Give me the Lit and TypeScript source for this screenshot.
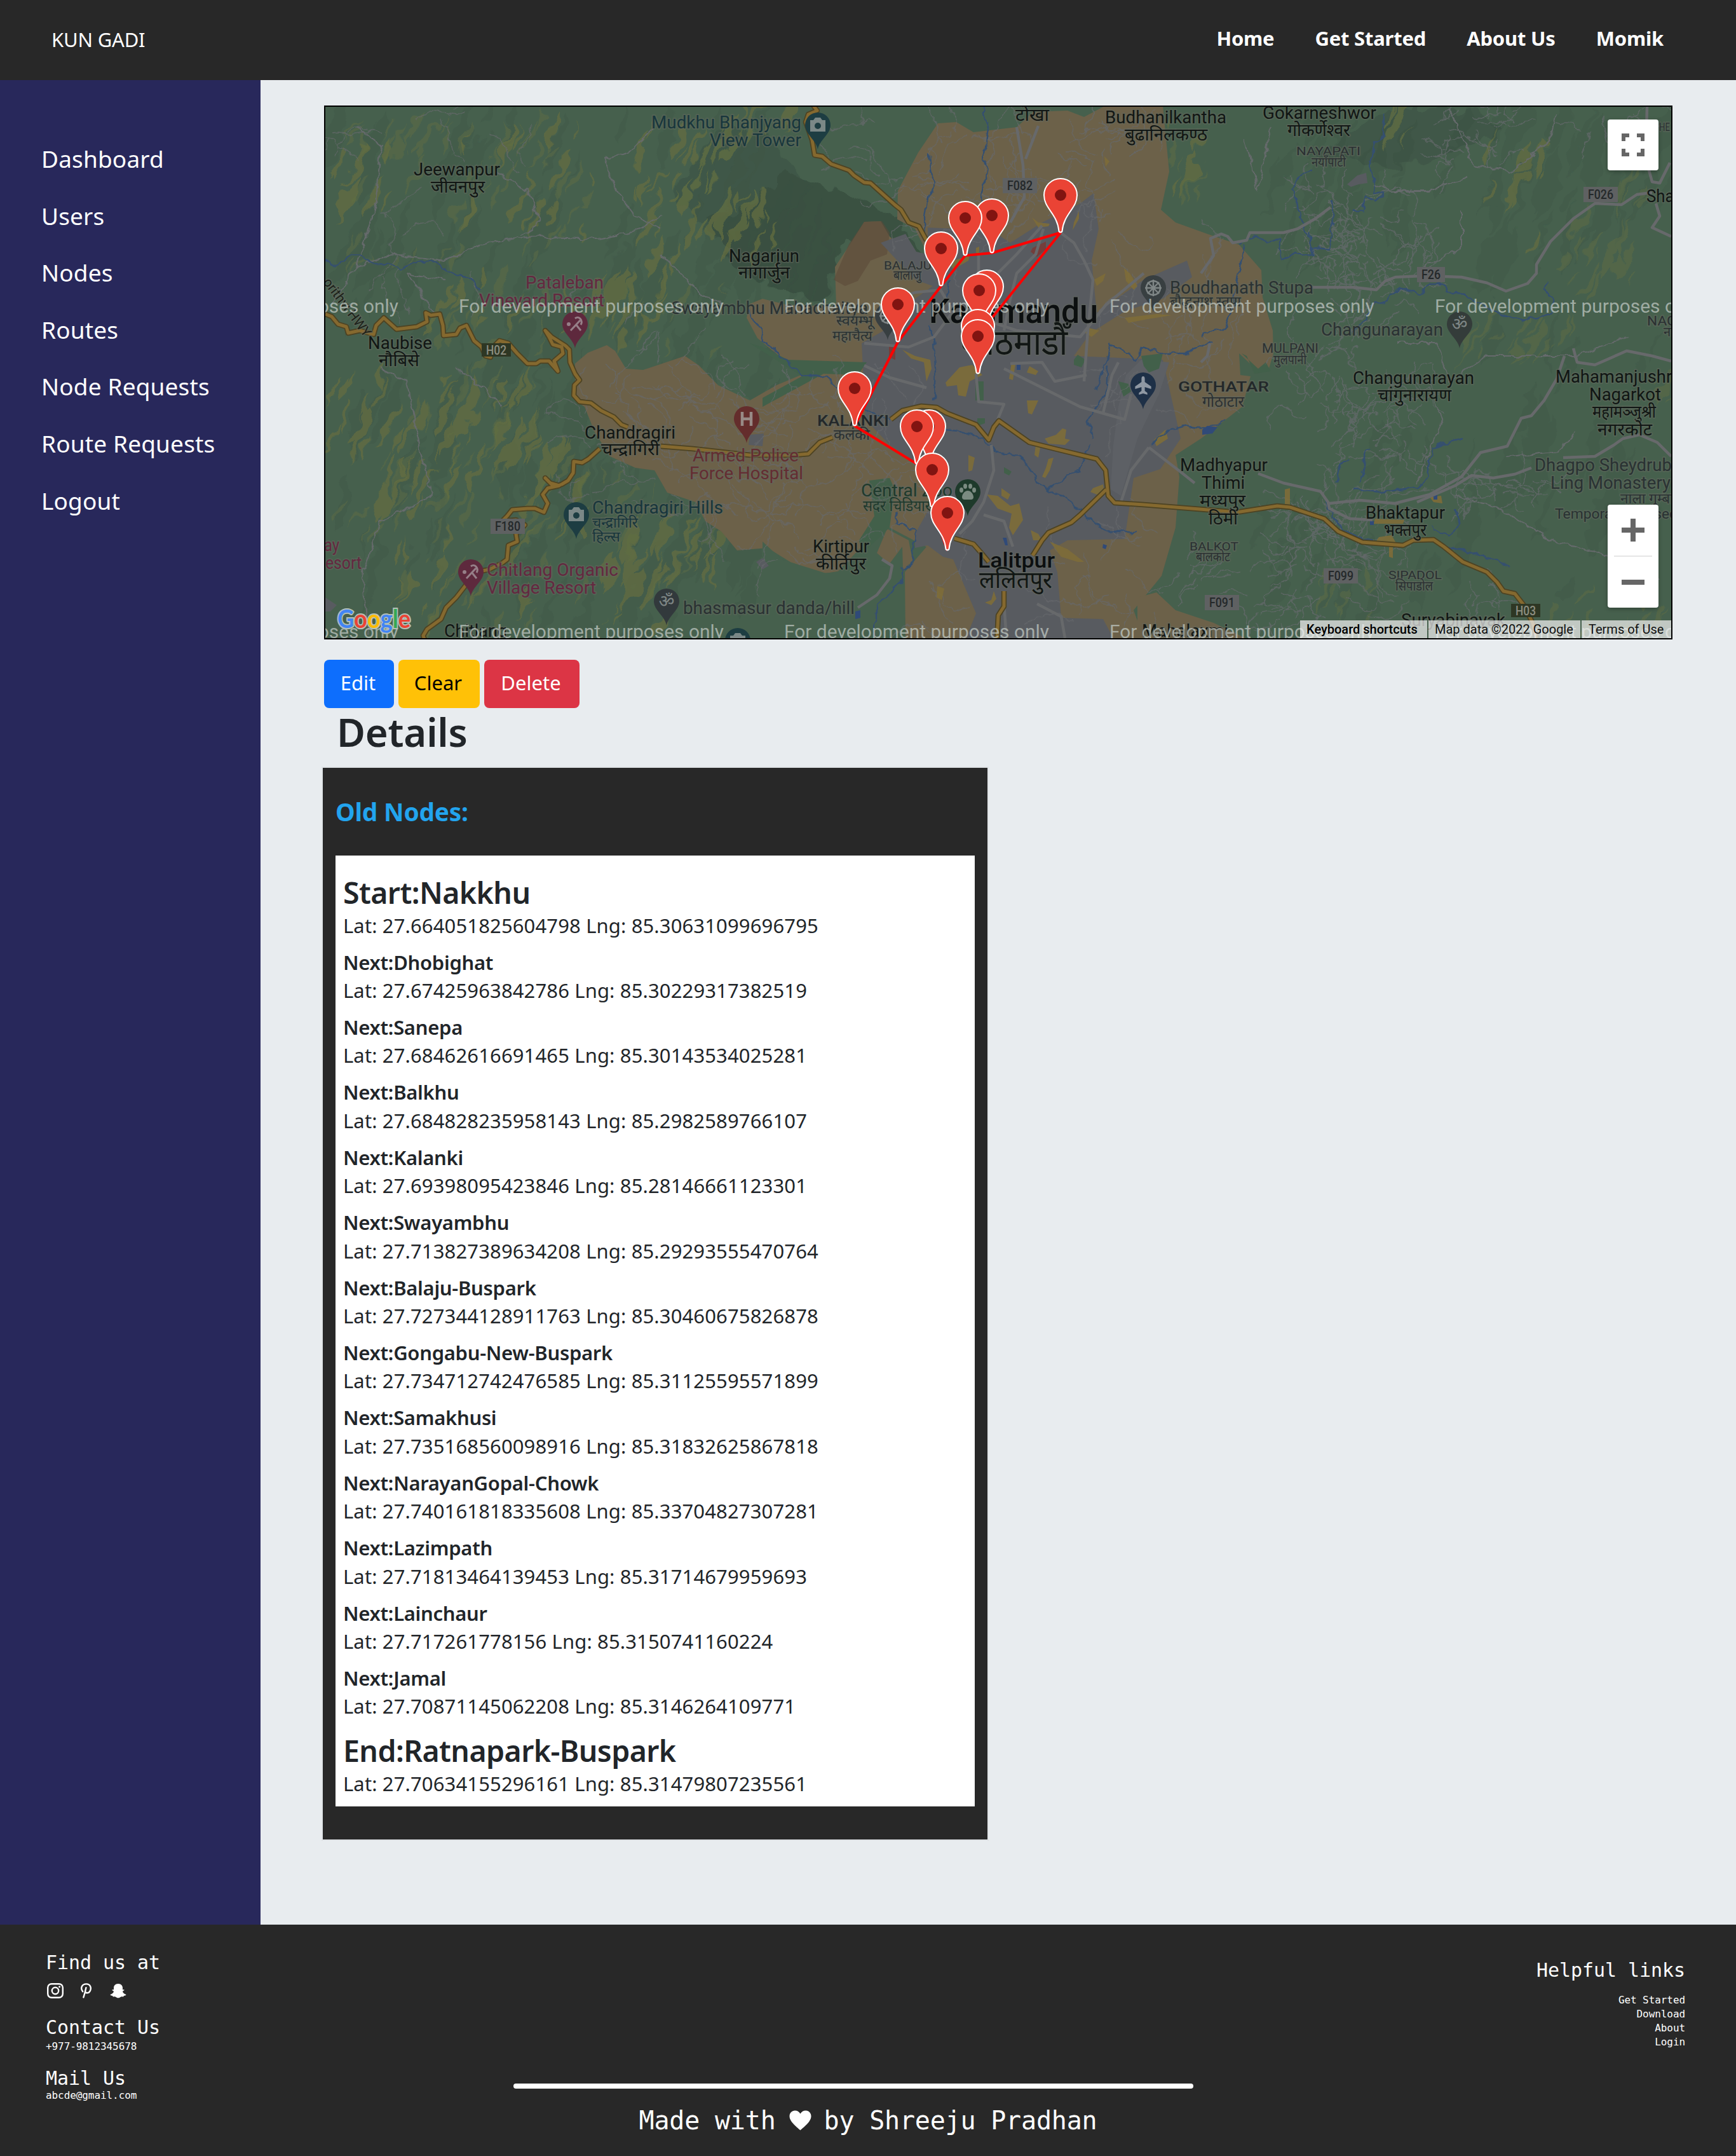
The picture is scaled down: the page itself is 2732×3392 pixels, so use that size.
import { LitElement, html, svg, css } from "lit";
import { customElement } from "lit/decorators.js";

/* ---------- route data ---------- */

interface RouteNode {
  name: string;
  lat: string;
  lng: string;
  x: number;
  y: number;
}

const NODES: RouteNode[] = [
  { name: "Nakkhu", lat: "27.664051825604798", lng: "85.30631099696795", x: 1491, y: 866 },
  { name: "Dhobighat", lat: "27.67425963842786", lng: "85.30229317382519", x: 1467, y: 798 },
  { name: "Sanepa", lat: "27.68462616691465", lng: "85.30143534025281", x: 1462, y: 730 },
  { name: "Balkhu", lat: "27.684828235958143", lng: "85.2982589766107", x: 1443, y: 730 },
  { name: "Kalanki", lat: "27.69398095423846", lng: "85.28146661123301", x: 1345, y: 670 },
  { name: "Swayambhu", lat: "27.713827389634208", lng: "85.29293555470764", x: 1413, y: 538 },
  { name: "Balaju-Buspark", lat: "27.727344128911763", lng: "85.30460675826878", x: 1481, y: 450 },
  { name: "Gongabu-New-Buspark", lat: "27.734712742476585", lng: "85.31125595571899", x: 1519, y: 402 },
  { name: "Samakhusi", lat: "27.735168560098916", lng: "85.31832625867818", x: 1561, y: 398 },
  { name: "NarayanGopal-Chowk", lat: "27.740161818335608", lng: "85.33704827307281", x: 1669, y: 366 },
  { name: "Lazimpath", lat: "27.71813464139453", lng: "85.31714679959693", x: 1553, y: 510 },
  { name: "Lainchaur", lat: "27.717261778156", lng: "85.3150741160224", x: 1541, y: 516 },
  { name: "Jamal", lat: "27.70871145062208", lng: "85.3146264109771", x: 1539, y: 572 },
  { name: "Ratnapark-Buspark", lat: "27.70634155296161", lng: "85.31479807235561", x: 1539, y: 588 },
];

const routeLine = NODES.map((n) => `${n.x},${n.y}`).join(" ");
const markers = [...NODES].sort((a, b) => a.y - b.y);

/* ---------- terrain generation ---------- */

function seeded(seed: number) {
  let a = seed;
  return () => {
    a = (a + 0x6d2b79f5) | 0;
    let t = Math.imul(a ^ (a >>> 15), 1 | a);
    t = (t + Math.imul(t ^ (t >>> 7), 61 | t)) ^ t;
    return ((t ^ (t >>> 14)) >>> 0) / 4294967296;
  };
}

type Region = [x: number, y: number, w: number, h: number, count: number];

function ridges(seed: number, regions: Region[], min: number, max: number, slant: number) {
  const r = seeded(seed);
  let d = "";
  for (const [x, y, w, h, n] of regions) {
    for (let i = 0; i < n; i++) {
      const cx = x + r() * w;
      const cy = y + r() * h;
      const len = min + r() * (max - min);
      const fat = len * (0.16 + r() * 0.3);
      const sx = len * slant * (0.3 + r());
      d += `M${(cx - sx).toFixed(0)} ${(cy + len).toFixed(0)}Q${(cx - fat).toFixed(0)} ${cy.toFixed(0)} ${(cx + sx).toFixed(0)} ${(cy - len).toFixed(0)}Q${(cx + fat * 1.3).toFixed(0)} ${(cy + fat * 0.4).toFixed(0)} ${(cx - sx).toFixed(0)} ${(cy + len).toFixed(0)}Z`;
    }
  }
  return d;
}

function lanes(seed: number, regions: Region[], steps: number, stride: number) {
  const r = seeded(seed);
  let d = "";
  for (const [x, y, w, h, n] of regions) {
    for (let i = 0; i < n; i++) {
      let px = x + r() * w;
      let py = y + r() * h;
      let a = r() * Math.PI * 2;
      d += `M${px.toFixed(0)} ${py.toFixed(0)}`;
      for (let s = 0; s < steps; s++) {
        a += (r() - 0.5) * 1.5;
        px += Math.cos(a) * stride;
        py += Math.sin(a) * stride;
        d += `L${px.toFixed(0)} ${py.toFixed(0)}`;
      }
    }
  }
  return d;
}

const DARK = ridges(7, [
  [512, 168, 700, 836, 150], [1060, 330, 240, 150, 26], [2000, 168, 630, 260, 60],
  [1950, 700, 680, 300, 34], [2300, 520, 320, 300, 16],
], 20, 70, 0.4);
const YELLOW = ridges(21, [
  [512, 220, 110, 110, 10], [720, 200, 220, 170, 18], [990, 200, 250, 210, 50], [1100, 168, 150, 60, 10],
  [640, 420, 300, 110, 10], [930, 440, 130, 100, 18], [520, 590, 150, 130, 20], [690, 590, 60, 170, 20],
  [780, 590, 60, 150, 20], [590, 730, 80, 80, 12], [820, 700, 100, 170, 12], [590, 840, 240, 130, 16], [940, 830, 190, 150, 30],
  [1830, 190, 60, 120, 6], [2175, 170, 50, 60, 6], [2340, 220, 90, 160, 10], [1240, 900, 60, 90, 5],
], 10, 36, 0.5);
const YELLOW_SOFT = ridges(33, [
  [2480, 350, 90, 90, 22], [2540, 280, 60, 40, 8], [2310, 500, 190, 60, 26], [2600, 580, 30, 60, 5],
  [2080, 890, 90, 80, 8], [2400, 930, 220, 70, 12], [2440, 380, 80, 70, 6], [1840, 230, 50, 90, 6],
  [540, 190, 330, 60, 34], [540, 260, 400, 160, 28], [600, 860, 500, 130, 24], [640, 440, 500, 120, 24],
  [520, 580, 330, 260, 40], [820, 730, 300, 120, 20],
], 8, 28, 0.6);
const LANES = lanes(5, [
  [512, 170, 330, 330, 16], [1300, 190, 130, 120, 8], [1450, 200, 380, 180, 52], [1740, 400, 230, 260, 26],
  [905, 570, 350, 240, 64], [1200, 620, 260, 270, 56], [1450, 880, 90, 110, 6], [1650, 830, 180, 150, 16],
  [2090, 700, 140, 250, 30],
], 9, 9);
const LANES_FINE = lanes(11, [
  [2040, 290, 150, 130, 44], [2090, 340, 160, 180, 60], [2010, 520, 130, 130, 26], [2100, 590, 150, 130, 48],
  [2020, 780, 120, 90, 40], [2290, 740, 140, 60, 26], [1960, 880, 120, 110, 28], [2270, 168, 90, 100, 22],
  [1850, 860, 60, 60, 10], [2240, 900, 120, 90, 8], [1700, 200, 120, 60, 12], [2380, 168, 240, 90, 12],
  [880, 470, 220, 110, 6],
], 7, 7);

/* ---------- areas and ways ---------- */

const TAN = [
  "M905 572L925 555L955 543L968 552L985 580L1012 582L1078 560L1100 575L1130 606L1180 630L1222 606L1265 588L1232 565L1192 532L1175 500L1180 478L1200 470L1240 480L1316 482L1314 420L1338 384L1360 349L1386 348L1400 372L1430 400L1460 400L1440 360L1412 345L1413 300L1445 240L1476 194L1505 192L1532 208L1600 200L1626 176L1680 174L1706 184L1740 166L1830 166L1840 270L1827 330L1850 350L1900 368L1950 385L1985 425L1987 468L2003 520L2004 556L1996 583L1980 584L1950 556L1952 590L1968 592L1955 640L1890 690L1850 716L1856 750L1850 830L1828 906L1784 960L1800 1004L1500 1004L1425 1004L1424 900L1460 858L1495 880L1400 830L1395 806L1356 860L1318 900L1292 902L1245 885L1208 862L1160 866L1135 836L1110 820L1095 790L1050 775L1030 740L1000 736L960 718L936 680L920 640L905 630Z",
  "M1380 870L1396 832L1430 850L1436 882L1418 904L1396 884Z",
  "M1790 940L1820 932L1850 960L1910 980L1960 1004L1790 1004Z",
];
const BROWN = "M1336 384L1360 349L1388 348L1400 366L1396 400L1370 410L1350 442L1330 450L1312 440Z";
const GREY = [
  "M1386 382L1425 368L1442 396L1476 404L1460 372L1460 358L1560 362L1590 382L1640 350L1700 320L1721 304L1729 360L1718 410L1722 452L1726 492L1800 440L1868 410L1876 436L1830 470L1770 490L1716 524L1690 560L1830 566L1858 690L1826 738L1784 752L1770 848L1680 850L1652 866L1664 900L1670 972L1736 974L1752 1004L1520 1004L1536 965L1500 880L1484 876L1460 858L1440 862L1440 840L1468 790L1470 748L1440 726L1400 700L1362 660L1356 540L1398 516L1440 470L1468 450L1440 440Z",
  "M2120 290L2136 276L2150 272L2152 288L2138 290L2126 294Z",
  "M512 940L530 952L520 962L512 962Z",
  "M1190 884L1200 878L1210 890L1200 896Z",
  "M1180 684L1202 682L1200 702L1178 700Z",
];
const AIRPORT = "M1752 700L1760 640L1772 590L1796 566L1840 570L1824 620L1790 690L1764 780L1748 770Z";
const PARKS = [
  "M1368 756L1400 752L1408 770L1400 830L1356 872L1352 850L1376 812Z",
  "M1690 566L1696 558L1708 566L1702 578L1690 574Z",
  "M1535 600L1548 600L1548 630L1535 630Z",
  "M1538 658L1550 658L1550 666L1538 670Z",
  "M1760 600L1776 604L1780 616L1768 624Z",
  "M1580 735L1592 742L1588 748L1580 744Z",
  "M1796 560L1830 556L1824 580L1808 586L1800 576Z",
  "M1954 556L1962 560L1974 588L2000 584L1992 570L1980 580Z",
  "M1364 570L1350 590L1296 588L1200 640L1200 626L1262 592L1180 540L1200 546L1240 566Z",
];
const CITY_YELLOW = [
  "M1488 602L1510 578L1530 574L1546 590L1526 600L1520 624L1508 622L1506 606L1490 608Z",
  "M1494 412L1526 402L1524 410L1500 424Z", "M1536 390L1541 388L1541 398L1536 398Z",
  "M1553 778L1570 780L1590 796L1604 792L1610 818L1594 842L1588 830L1592 808L1570 800Z",
  "M1576 768L1590 778L1586 786L1576 780Z", "M1630 700L1638 700L1634 720L1628 716Z",
  "M1650 722L1658 720L1652 740L1645 752L1640 750L1646 736Z", "M1616 630L1634 630L1624 652L1618 650Z",
  "M1644 690L1662 684L1672 674L1678 676L1676 690L1684 692L1676 700L1650 698Z",
  "M1720 768L1736 762L1738 778L1726 778L1716 774Z", "M1622 834L1634 840L1640 850L1626 850Z",
  "M1652 852L1680 864L1706 884L1696 884L1670 876Z", "M1524 716L1534 720L1530 740L1524 742Z",
  "M1420 550L1440 560L1464 566L1466 580L1458 600L1454 570L1434 564Z",
  "M1722 440L1740 430L1736 442L1726 450Z", "M1769 422L1778 430L1790 450L1784 456L1772 442Z",
  "M1690 350L1698 332L1698 344L1688 362Z", "M1624 342L1634 350L1652 352L1650 356L1634 358Z",
  "M1710 515L1730 520L1718 530L1708 524Z", "M1770 500L1820 494L1844 496L1806 502L1776 508Z",
  "M1475 922L1486 926L1482 944L1474 940Z", "M1564 930L1568 942L1560 952L1550 948L1560 944Z",
  "M1816 692L1834 676L1838 690L1820 702Z", "M1738 246L1746 254L1740 262Z", "M1620 576L1634 584L1630 590L1616 586Z",
  "M1592 570L1598 572L1594 598L1588 596Z", "M2170 845L2190 842L2198 856L2164 854Z", "M2164 816L2210 818L2208 824L2162 824Z",
  "M2250 782L2268 780L2270 792L2256 790Z", "M2186 860L2192 860L2192 878L2186 876Z", "M2022 770L2030 768L2030 794L2022 794Z",
];
const RIVERS = [
  "M512 410L530 417L546 406L560 401L576 408L590 415L616 416L630 422L655 412L685 411L700 424L720 434L740 437L748 444L755 457",
  "M1548 166L1556 206L1548 250L1554 264L1546 310L1550 340L1544 360",
  "M1462 240L1464 268L1472 290L1458 318L1455 340L1456 380",
  "M1178 485L1180 500L1196 514L1200 532L1220 555L1240 570L1262 588L1280 594L1300 592L1310 604L1330 620L1370 650L1400 660",
  "M1485 674L1510 676L1530 684L1548 692L1555 700L1575 713L1605 718L1622 738L1632 760L1648 770L1670 760L1682 746L1700 742L1716 700",
  "M1648 770L1670 780L1700 802L1720 822L1750 838L1788 838",
  "M1408 806L1412 824L1440 834L1438 864L1436 886L1420 896L1416 920L1400 932L1378 956L1378 1004",
  "M2178 180L2177 214L2164 226L2156 256L2160 276L2164 300L2176 306L2164 316L2150 310L2144 334L2130 330",
  "M2064 270L2048 272L2032 296L2040 306L2044 340L2050 350L2066 390L2090 392L2098 350L2096 318",
  "M1958 384L1948 442L1940 480L1928 520L1906 522L1890 528",
  "M1948 384L1978 370L1990 380L2012 376L2018 408L2040 398L2068 404L2060 364",
  "M2128 524L2150 500L2164 478L2180 474L2196 458L2214 456L2236 462L2250 446L2270 446L2276 460L2304 462L2330 480L2360 494L2400 504L2440 494L2446 470L2430 456L2434 446",
  "M1726 614L1744 560L1746 543L1770 552L1788 568L1796 546L1830 556L1870 556L1904 538",
  "M2102 760L2110 730L2120 722M2130 770L2170 774L2240 765L2250 730L2256 704L2300 690M2140 760L2150 710L2154 706",
  "M2084 780L2096 812L2110 830L2140 846L2160 850M2254 830L2280 842L2296 830L2290 800M2280 860L2330 874L2360 882L2376 892",
  "M1470 630L1472 580L1470 540L1462 510M1494 440L1490 470L1500 490",
  "M1720 690L1712 660L1740 620L1744 576",
  "M1812 700L1838 676L1870 670L1902 674L1930 660",
];
const LAKES = ["M1892 676L1900 670L1916 672L1908 682L1892 684Z", "M1600 574L1606 574L1606 582L1600 582Z", "M1346 962L1354 960L1354 972L1346 974Z", "M2256 778L2262 778L2262 786L2256 786Z", "M2156 820L2162 820L2162 826L2156 826Z", "M1736 856L1742 858L1740 864L1735 862Z", "M1578 846L1584 846L1586 858L1582 858Z"];

const MAIN_ROADS = [
  "M1890 430L1910 402L1905 375L1922 368L1932 372L1940 382L1962 378L1967 366L2020 366L2042 360L2070 344L2094 326",
  "M2060 452L2130 452L2166 456L2180 442L2196 436L2240 434L2300 436L2340 445L2370 458L2404 446L2418 430L2418 416L2440 380L2476 344L2510 320L2552 322L2576 306L2600 303",
  "M2592 168L2590 250L2600 286L2612 288L2628 256M2606 320L2612 340L2600 358L2630 372",
  "M1980 745L2020 760L2078 773L2090 790L2092 800L2124 816L2160 818",
  "M2092 792L2140 787L2195 792L2250 778L2300 750L2330 712L2372 702L2394 658L2410 654L2430 630L2450 596L2462 560",
  "M2230 790L2290 764L2316 748L2350 752L2384 746L2410 736",
  "M2460 720L2510 718L2540 700L2554 690L2580 684L2608 696L2630 718",
  "M2476 548L2482 570L2510 574L2560 552L2600 560L2630 568",
  "M1669 366L1690 382L1706 410L1720 440L1712 520L1706 600",
  "M1642 360L1630 400L1600 430L1590 470L1580 520M1540 440L1540 400M1640 355L1600 400L1570 430",
  "M1400 474L1440 460L1482 456M1480 456L1500 490L1470 530L1430 546L1360 540",
  "M1360 575L1400 594L1458 610M1536 588L1540 632L1580 636L1570 660M1580 580L1700 640L1770 660L1780 620",
  "M1560 700L1564 740L1548 790L1530 820L1510 840M1548 810L1580 820L1594 860M1808 704L1860 744L1880 760M1808 704L1780 740L1764 790",
  "M1540 500L1600 520L1700 530L1740 480L1800 430M1590 572L1640 570L1660 600L1710 590",
  "M1580 950L1584 1004M1632 950L1670 970L1676 1004M1350 956L1380 936L1400 910L1404 890L1388 880M1736 650L1750 590L1760 570",
  "M1600 200L1610 260L1612 310L1590 350M1634 198L1614 250M1904 540L1900 560L1890 570",
];
const HIGHWAYS = [
  "M512 494L522 498L532 510L545 514L548 524L566 520L588 526L592 512L604 500L624 518L656 514L672 506L670 492L678 496L692 494L697 512L698 528L718 526L724 516L734 512L746 536L758 546L764 560L772 562L776 546L786 536L800 540L814 556L830 572L844 572L850 568L864 568L878 584L872 568L886 556L884 546L870 542L864 530L858 520L868 530L890 544L896 550L897 570L905 588L912 598L904 606L903 622L912 632L930 634L946 646L966 656L978 668L988 672",
  "M1040 702L1090 706L1180 716L1250 716L1272 714L1290 696L1310 688M1402 660L1420 646L1450 639L1474 641L1490 650L1536 668L1556 692L1564 672L1572 662L1620 696L1660 706L1726 722L1740 740L1744 780L1754 791L1800 794L1900 802L1946 806L2010 796L2030 798L2084 816L2106 836L2144 853L2208 858L2224 850L2256 849L2272 860L2302 884L2340 900L2356 916L2366 930L2384 934L2398 952L2412 980L2418 1004",
  "M944 706L926 722L916 728L903 726L902 744L894 756L884 762L872 766L858 752L866 760L880 764L862 768L854 778L862 792L856 806L842 800L830 800L806 802L798 812L790 820L812 818L826 826L812 840L814 852L800 858L798 880L790 886L770 896L748 900L732 922L718 940L702 956L694 974L672 990L666 1000L668 1006",
  "M1280 166L1286 174L1272 180L1268 192L1278 220L1282 244L1294 246L1308 258L1336 268L1344 276L1360 287L1370 288L1408 322L1418 330L1430 350L1446 356L1458 378",
  "M1741 770L1700 810L1686 822L1650 838L1640 850L1625 874M1502 847L1532 856L1546 872L1556 884M1580 930L1580 954L1571 968L1569 1006",
];

/* ---------- labels ---------- */

type Label = [text: string, x1: number, x2: number, y: number, size: number, tone: string];

const LABELS: Label[] = [
  ["Mudkhu Bhanjyang", 1025, 1261, 202, 27, "teal"], ["View Tower", 1117, 1261, 230, 27, "teal"],
  ["Jeewanpur", 651, 787, 276, 27, "town"], ["जीवनपुर", 678, 763, 303, 27, "town"],
  ["Nagarjun", 1147, 1258, 412, 27, "town"], ["नागार्जुन", 1162, 1243, 438, 27, "town"],
  ["Pataleban", 827, 950, 454, 27, "plum"], ["Vineyard Resort", 754, 951, 482, 27, "plum"],
  ["Naubise", 579, 680, 549, 27, "town"], ["नौबिसे", 596, 660, 576, 27, "town"],
  ["Swayambhu Mahachaitya", 1056, 1366, 494, 27, "slate"],
  ["स्वयम्भू", 1316, 1374, 512, 22, "slate"], ["महाचैत्य", 1310, 1373, 536, 22, "slate"],
  ["BALAJU", 1391, 1466, 424, 19, "small"], ["बालाजु", 1406, 1450, 440, 20, "small"],
  ["टोखा", 1598, 1651, 190, 27, "town"],
  ["Budhanilkantha", 1739, 1930, 194, 27, "town"], ["बुढानिलकण्ठ", 1770, 1900, 221, 27, "town"],
  ["Boudhanath Stupa", 1841, 2067, 462, 27, "slate"], ["बौद्धनाथ स्तूपा", 1841, 1953, 482, 22, "slate"],
  ["Kathmandu", 1462, 1728, 508, 53, "city"], ["काठमाडौँ", 1512, 1680, 558, 56, "town"],
  ["Gokarneshwor", 1987, 2166, 187, 27, "town"], ["गोकर्णेश्वर", 2026, 2125, 214, 27, "town"],
  ["NAYAPATI", 2040, 2141, 244, 19, "small"], ["नयाँपाटी", 2064, 2118, 262, 20, "small"],
  ["HE", 2611, 2628, 206, 19, "small"], ["Shankharapur", 2591, 2750, 318, 27, "town"],
  ["Changunarayan", 2079, 2271, 528, 27, "slate"],
  ["MULPANI", 1986, 2075, 555, 20, "small"], ["मुलपानी", 2004, 2056, 573, 20, "small"],
  ["NAGARKOT", 2592, 2710, 512, 20, "small"], ["नगरकोट", 2618, 2680, 529, 20, "small"],
  ["Changunarayan", 2129, 2320, 604, 27, "town"], ["चांगुनारायण", 2168, 2284, 631, 27, "town"],
  ["Mahamanjushree", 2448, 2660, 602, 27, "town"], ["Nagarkot", 2501, 2614, 630, 27, "town"],
  ["महामञ्जुश्री", 2506, 2606, 657, 27, "town"], ["नगरकोट", 2514, 2600, 685, 27, "town"],
  ["Dhagpo Sheydrub", 2415, 2631, 741, 27, "slate"], ["Ling Monastery", 2440, 2629, 769, 27, "slate"],
  ["नाला गुम्बा", 2550, 2634, 792, 23, "slate"], ["Temporarily closed", 2447, 2640, 816, 22, "slate"],
  ["Madhyapur", 1857, 1995, 741, 27, "town"], ["Thimi", 1891, 1959, 769, 27, "town"],
  ["मध्यपुर", 1888, 1960, 797, 27, "town"], ["ठिमी", 1902, 1948, 825, 27, "town"],
  ["Bhaktapur", 2149, 2274, 816, 27, "town"], ["भक्तपुर", 2178, 2245, 843, 27, "town"],
  ["SIPADOL", 2185, 2269, 911, 18, "small"], ["सिपाडोल", 2196, 2255, 929, 20, "small"],
  ["BALKOT", 1872, 1949, 866, 18, "small"], ["बालकोट", 1882, 1936, 883, 20, "small"],
  ["Suryabinayak", 2205, 2369, 985, 27, "town"], ["Mahalaxmi", 1797, 1933, 1002, 27, "town"],
  ["GOTHATAR", 1854, 1997, 616, 22, "ward"], ["गोठाटार", 1892, 1958, 640, 24, "small"],
  ["Chandragiri", 920, 1063, 690, 27, "town"], ["चन्द्रागिरी", 946, 1038, 716, 27, "town"],
  ["Armed Police", 1090, 1257, 726, 27, "red"], ["Force Hospital", 1085, 1264, 754, 27, "red"],
  ["Chandragiri Hills", 932, 1138, 808, 27, "teal"], ["चन्द्रागिरि", 932, 1004, 830, 23, "teal"], ["हिल्स", 932, 976, 852, 23, "teal"],
  ["ay", 510, 534, 867, 27, "plum"], ["esort", 512, 569, 895, 27, "plum"],
  ["Chitlang Organic", 766, 973, 906, 27, "plum"], ["Village Resort", 766, 938, 934, 27, "plum"],
  ["bhasmasur danda/hill", 1075, 1345, 966, 27, "slate"], ["Chitlang", 699, 798, 1002, 27, "town"],
  ["KALANKI", 1286, 1399, 670, 23, "ward"], ["कलंकी", 1312, 1369, 692, 24, "small"],
  ["Central Zoo", 1355, 1499, 781, 27, "green"], ["सदर चिडियाखाना", 1358, 1498, 804, 24, "green"],
  ["Kirtipur", 1279, 1368, 869, 27, "town"], ["कीर्तिपुर", 1284, 1363, 896, 27, "town"],
  ["Lalitpur", 1539, 1660, 893, 34, "city"], ["ललितपुर", 1541, 1656, 925, 36, "town"],
];

const BADGES: [string, number, number, number, boolean][] = [
  ["H02", 758, 540, 46, true], ["H03", 2378, 950, 46, true],
  ["F082", 1578, 280, 54, false], ["F026", 2492, 294, 54, false], ["F26", 2230, 420, 44, false],
  ["F180", 772, 816, 54, false], ["F099", 2083, 894, 54, false], ["F091", 1896, 936, 54, false],
];

const camera = svg`<path d="M-12 -8h5l3-4h8l3 4h5v18h-24z" fill="#7b8887"/><circle cy="1" r="5" fill="#1d3d42"/>`;
const dining = svg`<g stroke="#967f88" stroke-width="3" fill="none"><path d="M-7 10L8 -6M0 -9C6 -14 13 -6 9 1M1 0L9 10"/></g><circle cx="-10" cy="0" r="3" fill="#967f88"/>`;
const wheel = svg`<g stroke="#7f8686" stroke-width="2.4" fill="none"><circle r="11"/><path d="M-13 0H13M0 -13V13M-9 -9L9 9M9 -9L-9 9"/></g>`;
const om = svg`<text class="glyph" y="9" text-anchor="middle">ॐ</text>`;
const PLACES = [
  { x: 1287, y: 197, fill: "#1d3d42", icon: camera },
  { x: 907, y: 810, fill: "#1d3d42", icon: camera },
  { x: 1161, y: 1008, fill: "#1d3d42", icon: camera },
  { x: 905, y: 510, fill: "#5e293d", icon: dining },
  { x: 741, y: 900, fill: "#5e293d", icon: dining },
  { x: 1815, y: 453, fill: "#383f41", icon: wheel },
  { x: 1397, y: 497, fill: "#383f41", icon: wheel },
  { x: 2297, y: 510, fill: "#343c3a", icon: om },
  { x: 1049, y: 946, fill: "#32393c", icon: om },
  { x: 1175, y: 659, fill: "#642d2c", icon: svg`<path d="M-7 -11V11M7 -11V11M-7 0H7" stroke="#988a86" stroke-width="4.5" fill="none"/>` },
  { x: 1799, y: 606, fill: "#1e3047", icon: svg`<path d="M0 -14c2 0 2.6 2 2.6 4v5l10 7v4l-10-3v6l4 3v3l-6.600-2l-6.600 2v-3l4-3v-6l-10 3v-4l10-7v-5c0-2 .6-4 2.600-4z" fill="#8f98a3"/>` },
  { x: 1523, y: 774, fill: "#1e3a2b", icon: svg`<g fill="#7b8b81"><path d="M0 -2c5 0 9 6 9 10c0 5-5 4-9 4s-9 1-9-4c0-4 4-10 9-10z"/><ellipse cx="-10" cy="-3" rx="3" ry="4"/><ellipse cx="10" cy="-3" rx="3" ry="4"/><ellipse cx="-4" cy="-9" rx="3" ry="4"/><ellipse cx="4" cy="-9" rx="3" ry="4"/></g>` },
];

const WATERMARKS = [210, 722, 1234, 1746, 2258];

@customElement("route-map")
class RouteMap extends LitElement {
  static styles = css`
    :host {
      display: block;
      position: relative;
      height: 840px;
      box-sizing: border-box;
      border: 2px solid #000;
      overflow: hidden;
      background: #46604d;
      font-family: Roboto, "Noto Sans", sans-serif;
    }
    .canvas { display: block; width: 100%; height: 100%; }
    .label {
      paint-order: stroke;
      stroke: rgba(98, 104, 94, 0.5);
      stroke-width: 3.5px;
      stroke-linejoin: round;
    }
    .town { fill: #111614; }
    .city { fill: #0c0f10; font-weight: 500; }
    .ward { fill: #23282a; font-weight: 500; }
    .small { fill: #2b3032; }
    .slate { fill: #2a3233; }
    .teal { fill: #18363c; }
    .plum { fill: #642840; }
    .red { fill: #642d32; }
    .green { fill: #1f3a2d; }
    .watermark { fill: #c3cbc5; fill-opacity: 0.72; font-size: 29px; }
    .badge { font-size: 20px; font-weight: 500; }
    .hwy { font-size: 21px; fill: #1c2019; }
    .glyph { font-size: 27px; fill: #7f8786; font-family: "Noto Sans", sans-serif; }
    .logo { font-family: Lato, "Liberation Sans", sans-serif; font-size: 41px; font-weight: 700; paint-order: stroke; stroke: #b4c0b8; stroke-width: 4px; }
    .controls { position: absolute; right: 20px; }
    .full { top: 20px; }
    .zoom { bottom: 48px; }
    .pad {
      display: flex;
      flex-direction: column;
      align-items: center;
      background: #fff;
      border-radius: 4px;
      box-shadow: 0 2px 6px rgba(0, 0, 0, 0.3);
    }
    .btn { display: grid; place-items: center; width: 80px; height: 80px; }
    .rule { width: 60px; height: 2px; background: #e6e6e6; }
    .credits {
      position: absolute;
      right: 0;
      bottom: 0;
      display: flex;
      gap: 2px;
      height: 28px;
      font-size: 20px;
      line-height: 28px;
      color: #101010;
    }
    .credit { background: rgba(245, 245, 245, 0.7); white-space: nowrap; }
    .keys { width: 190px; padding-left: 10px; font-weight: 500; color: #000; }
    .data { width: 229px; padding-left: 10px; }
    .terms { width: 130px; padding-left: 11px; }
  `;

  render() {
    return html`
      <svg class="canvas" viewBox="512 168 2118 836" preserveAspectRatio="none">
        <defs>
          <filter id="rough" x="-5%" y="-5%" width="110%" height="110%">
            <feTurbulence type="fractalNoise" baseFrequency="0.035" numOctaves="2" seed="4" />
            <feDisplacementMap in="SourceGraphic" scale="34" xChannelSelector="R" yChannelSelector="G" />
          </filter>
          <filter id="jitter" x="-5%" y="-5%" width="110%" height="110%">
            <feTurbulence type="fractalNoise" baseFrequency="0.07" numOctaves="2" seed="9" />
            <feDisplacementMap in="SourceGraphic" scale="12" xChannelSelector="R" yChannelSelector="G" />
          </filter>
        </defs>
        <rect x="512" y="168" width="2118" height="836" fill="#46604d" />
        <g filter="url(#rough)">
          <path d=${DARK} fill="#3b5043" fill-opacity="0.28" />
          <path d="M1110 340L1180 330L1230 270L1290 290L1420 345L1440 400L1330 380L1300 470L1200 450L1140 400Z" fill="#354c3e" fill-opacity="0.75" />
          <path d="M1060 300L1140 190L1210 220L1280 300L1200 360L1120 370Z" fill="#3a5042" fill-opacity="0.5" />
          <path d="M2060 250L2180 170L2330 170L2360 210L2260 250L2180 260Z" fill="#3a5042" fill-opacity="0.55" />
          <path d=${YELLOW_SOFT} fill="#5a6b46" fill-opacity="0.6" />
          <path d=${YELLOW} fill="#636d42" fill-opacity="0.75" />
        </g>
        ${TAN.map((d) => svg`<path d=${d} fill="#6c6149"/>`)}
        <path d=${BROWN} fill="#5b4a38" fill-opacity="0.6" />
        <path d="M1420 860L1424 1004L1200 1004L1200 852L1230 880L1300 902L1370 890L1396 892Z" fill="#46604d" />
        ${GREY.map((d) => svg`<path d=${d} fill="#585b60"/>`)}
        <path d=${AIRPORT} fill="#5d6065" />
        ${PARKS.map((d) => svg`<path d=${d} fill="#42604a"/>`)}
        <path d="M1625 390L1646 380L1646 392L1632 404L1622 396Z" fill="#743e3c" />
        <path d="M1399 544L1409 544L1409 566L1399 562Z" fill="#743e3c" />
        <g filter="url(#jitter)" fill="none" stroke="#666a6c">
          <path d=${LANES} stroke-width="1.4" stroke-opacity="0.7" />
          <path d=${LANES_FINE} stroke-width="1.6" stroke-opacity="0.75" />
          <path d="M520 480L560 420L620 400L700 410L770 380L840 372L940 376L1000 365L1040 340M560 420L590 330L600 230L560 200M780 270L830 300L850 350L820 370M1030 200L990 240L950 250L970 300L1000 340L1040 360M700 440L640 430L690 500M1040 400L1100 460L1140 480M600 580L640 600L660 700L680 780L600 820L570 900L580 1000M720 580L760 610L790 640" stroke-width="2" />
          <path d="M2160 290L2190 300L2250 300L2310 280M2300 330L2300 390L2240 420M1960 220L1980 300L2000 200M2280 170L2320 260L2380 270L2440 220L2450 180M2200 540L2260 540L2280 600L2340 560L2480 560L2560 530M2290 780L2360 800L2440 850L2520 870L2610 910M2250 600L2270 660L2230 760M2370 720L2450 710L2480 680" stroke-width="2" />
        </g>
        <g fill="#7e6d38" fill-opacity="0.9">${CITY_YELLOW.map((d) => svg`<path d=${d}/>`)}</g>
        <g filter="url(#jitter)" fill="none" stroke="#35506f" stroke-width="2.4">${RIVERS.map((d) => svg`<path d=${d}/>`)}</g>
        <g fill="#304a78">${LAKES.map((d) => svg`<path d=${d}/>`)}</g>
        <g fill="none" stroke="#67696b" stroke-width="4.500" stroke-linejoin="round">${MAIN_ROADS.map((d) => svg`<path d=${d}/>`)}</g>
        <g fill="none" stroke-linejoin="round">
          ${HIGHWAYS.map((d) => svg`<path d=${d} stroke="#4d4323" stroke-width="8.5"/>`)}
          ${HIGHWAYS.map((d) => svg`<path d=${d} stroke="#85692f" stroke-width="5"/>`)}
        </g>
        ${BADGES.map(([t, x, y, w, dark]) => svg`
          <rect x=${x} y=${y} width=${w} height=${dark ? 21 : 24} fill=${dark ? "#2e3724" : "#5f6162"}/>
          <text class="badge" x=${x + 7} y=${y + (dark ? 17.5 : 19)} textLength=${w - 14} lengthAdjust="spacingAndGlyphs" fill=${dark ? "#8d8e80" : "#24282a"}>${t}</text>`)}
        ${PLACES.map((p) => svg`
          <g transform="translate(${p.x} ${p.y})">
            <path d="M0 38C-2 24 -20 14 -20 0A20 20 0 0 1 20 0C20 14 2 24 0 38Z" fill=${p.fill}/>
            ${p.icon}
          </g>`)}
        <text class="label hwy" transform="translate(508 444) rotate(53)">orithvi HWY</text>
        ${LABELS.map(([t, x1, x2, y, s, tone]) => svg`<text class="label ${tone}" x=${x1} y=${y} font-size=${s} textLength=${x2 - x1} lengthAdjust="spacingAndGlyphs">${t}</text>`)}
        ${[492, 1004].map((y) => WATERMARKS.map((x) => svg`<text class="watermark" x=${x} y=${y} textLength="417" lengthAdjust="spacingAndGlyphs">For development purposes only</text>`))}
        <polyline points=${routeLine} fill="none" stroke="#f00" stroke-width="4" stroke-linejoin="round" />
        ${markers.map((n) => svg`
          <g transform="translate(${n.x} ${n.y})">
            <path d="M-2.500 -2C-5 -30 -26 -38 -26 -59A26 26 0 0 1 26 -59C26 -38 5 -30 2.500 -2Q0 1 -2.500 -2Z" fill="#ea4335" stroke="#fff" stroke-width="2"/>
            <circle cy="-59" r="9" fill="#811411"/>
          </g>`)}
        <text class="logo" x="531" y="988" textLength="115" lengthAdjust="spacingAndGlyphs"><tspan fill="#4285f4">G</tspan><tspan fill="#ea4335">o</tspan><tspan fill="#fbbc05">o</tspan><tspan fill="#4285f4">g</tspan><tspan fill="#34a853">l</tspan><tspan fill="#ea4335">e</tspan></text>
      </svg>
      <div class="controls full">
        <div class="pad">
          <div class="btn">
            <svg width="36" height="36" viewBox="0 0 36 36" fill="none" stroke="#666" stroke-width="6"><path d="M3 12V3H12M24 3H33V12M33 24V33H24M12 33H3V24" /></svg>
          </div>
        </div>
      </div>
      <div class="controls zoom">
        <div class="pad">
          <div class="btn"><svg width="36" height="36" viewBox="0 0 36 36"><path d="M14 0h8v14h14v8h-14v14h-8v-14h-14v-8h14z" fill="#666" /></svg></div>
          <div class="rule"></div>
          <div class="btn"><svg width="36" height="36" viewBox="0 0 36 36"><path d="M0 14h36v8h-36z" fill="#666" /></svg></div>
        </div>
      </div>
      <div class="credits">
        <div class="credit keys">Keyboard shortcuts</div>
        <div class="credit data">Map data ©2022 Google</div>
        <div class="credit terms">Terms of Use</div>
      </div>
    `;
  }
}

@customElement("node-details")
class NodeDetails extends LitElement {
  static styles = css`
    :host { display: block; }
    .card {
      box-sizing: border-box;
      width: 1046px;
      height: 1686px;
      margin: 20px 0 0 -2px;
      padding: 45px 20px 52px;
      background: #282828;
      box-shadow: 0 0 0 2px #dfe3e6;
    }
    .heading { margin: 0 0 45px; font-size: 38.8px; line-height: 48px; font-weight: 700; letter-spacing: -0.2px; color: #22a4ee; }
    .list { background: #fff; height: 1496px; box-sizing: border-box; padding: 28px 12px 12px; color: #212529; }
    .big { font-size: 46.5px; line-height: 61.6px; margin-bottom: -4px; font-weight: 600; letter-spacing: -0.6px; }
    .name { font-size: 31px; line-height: 36.4px; padding-bottom: 2px; font-weight: 600; letter-spacing: -0.3px; }
    .coords { font-size: 31px; line-height: 48px; letter-spacing: 0.13px; margin-bottom: 16px; }
    .coords:last-child { margin-bottom: 0; }
  `;

  render() {
    const last = NODES.length - 1;
    return html`
      <section class="card">
        <div class="heading">Old Nodes:</div>
        <div class="list">
          ${NODES.map((n, i) => html`
            <div class=${i === 0 || i === last ? "big" : "name"}>${i === 0 ? "Start" : i === last ? "End" : "Next"}:${n.name}</div>
            <div class="coords">Lat: ${n.lat} Lng: ${n.lng}</div>`)}
        </div>
      </section>
    `;
  }
}

@customElement("page-footer")
class PageFooter extends LitElement {
  static styles = css`
    :host { display: block; background: #282828; color: #fff; font-family: "DejaVu Sans Mono", "Liberation Mono", monospace; }
    .grid { display: grid; grid-template-columns: 808px 1070px 1fr; height: 364px; }
    .left { padding: 40px 0 0 72px; }
    .title { font-size: 30px; line-height: 40px; letter-spacing: -0.06px; }
    .tiny { font-size: 16px; letter-spacing: -0.08px; }
    .phone { line-height: 20px; margin-bottom: 20px; }
    .mail { line-height: 14px; }
    .icons { display: flex; align-items: center; height: 24px; margin: 12px 0 26px 2px; }
    .pin { margin: 0 29px 0 27px; }
    .middle { padding-top: 250px; }
    .bar { height: 8px; border-radius: 4px; background: #fff; }
    .made { display: flex; justify-content: center; align-items: center; margin: 25px 0 0 46px; font-size: 40px; line-height: 50px; letter-spacing: -0.2px; white-space: nowrap; }
    .heart { margin: 0 20px 0 21px; }
    .right { display: flex; flex-direction: column; align-items: flex-end; padding: 52px 80px 0 0; }
    .links { display: flex; flex-direction: column; align-items: flex-end; margin-top: 16px; }
    .link { line-height: 22px; }
    svg { display: block; }
  `;

  render() {
    return html`
      <div class="grid">
        <div class="left">
          <div class="title">Find us at</div>
          <div class="icons">
            <svg width="26" height="24" viewBox="0 0 26 24" fill="none" stroke="#fff">
              <rect x="1.200" y="1.200" width="23.600" height="21.600" rx="6" stroke-width="2.400" />
              <circle cx="13" cy="12" r="5.200" stroke-width="2.400" />
              <circle cx="19.600" cy="5.800" r="1.500" fill="#fff" stroke="none" />
            </svg>
            <svg class="pin" width="17" height="24" viewBox="0 0 17 24" fill="none" stroke="#fff" stroke-width="2.400" stroke-linecap="round">
              <path d="M3.200 13.200C-1 8 2 1.400 8.800 1.400C15.500 1.400 17.200 7.800 14.600 12.600C12.800 16 8.600 16.400 7.200 13.600M8.400 7.200C7.400 12.600 6 17.500 4.400 22.400" />
            </svg>
            <svg width="26" height="24" viewBox="0 0 26 24" fill="#fff">
              <path d="M13 1C17.600 1 20 4 20 7.600C20 8.600 19.900 9.600 19.900 10.200C20.800 10.600 21.800 9.800 22.500 10.500C23 11.400 21 12 20 12.800C20.200 15.600 22.800 17.200 25.500 17.900C25.300 19.400 23.200 19.500 21.800 19.900C21.400 20.500 21.700 21.200 20.900 21.400C19.500 21.300 18.200 21 17 21.700C15.800 22.500 14.900 23.300 13 23.300C11.100 23.300 10.200 22.500 9 21.700C7.800 21 6.500 21.300 5.100 21.400C4.300 21.200 4.600 20.500 4.200 19.900C2.800 19.500 .7 19.400 .5 17.900C3.200 17.200 5.800 15.600 6 12.800C5 12 3 11.400 3.500 10.500C4.200 9.800 5.200 10.600 6.100 10.200C6.100 9.600 6 8.600 6 7.600C6 4 8.400 1 13 1Z" />
            </svg>
          </div>
          <div class="title">Contact Us</div>
          <div class="tiny phone">+977-9812345678</div>
          <div class="title">Mail Us</div>
          <div class="tiny mail">abcde@gmail.com</div>
        </div>
        <div class="middle">
          <div class="bar"></div>
          <div class="made">
            <span>Made with</span>
            <svg class="heart" width="35" height="32" viewBox="0 0 35 32" fill="#fff"><path d="M17.500 31.500C14 28 0.500 18.500 0.500 9.500C0.500 4 4.500 0.500 9 0.500C12.500 0.500 15.800 2.400 17.500 5.600C19.200 2.400 22.500 0.500 26 0.500C30.500 0.500 34.500 4 34.500 9.500C34.500 18.500 21 28 17.500 31.500Z" /></svg>
            <span>by Shreeju Pradhan</span>
          </div>
        </div>
        <div class="right">
          <div class="title">Helpful links</div>
          <div class="links">
            ${["Get Started", "Download", "About", "Login"].map((t) => html`<div class="tiny link">${t}</div>`)}
          </div>
        </div>
      </div>
    `;
  }
}

@customElement("app-root")
class AppRoot extends LitElement {
  static styles = css`
    :host { display: block; background: #e8ecef; color: #212529; font-family: "Noto Sans", "Open Sans", sans-serif; }
    .top {
      display: flex;
      justify-content: space-between;
      align-items: center;
      box-sizing: border-box;
      height: 126px;
      padding: 0 114px 0 81px;
      background: #282828;
      color: #fff;
      font-size: 31px;
    }
    .brand { padding-bottom: 3px; letter-spacing: -0.2px; }
    .nav { display: flex; gap: 64px; padding-bottom: 6px; font-weight: 700; letter-spacing: -0.2px; }
    .body { display: flex; height: 2902px; }
    .side {
      box-sizing: border-box;
      flex: none;
      width: 410px;
      padding: 95px 0 0 65px;
      background: #28285b;
      color: #fff;
    }
    .item { font-size: 37px; line-height: 57.6px; margin-bottom: 32px; letter-spacing: 0.15px; }
    .main { flex: 1; padding: 40px 100px 0; }
    .actions { display: flex; gap: 7px; margin-top: 32px; }
    .action {
      box-sizing: border-box;
      height: 76px;
      padding: 0 3px 5px 0;
      border: 0;
      border-radius: 8px;
      font: 400 31px "Noto Sans", sans-serif;
      color: #fff;
    }
    .edit { width: 110px; background: #0d6efd; }
    .clear { width: 128px; background: #ffc107; color: #000; }
    .delete { width: 150px; background: #dc3545; }
    .details { margin: 0 0 0 20px; font-size: 61.5px; line-height: 74px; font-weight: 600; letter-spacing: -0.2px; }
  `;

  render() {
    return html`
      <header class="top">
        <div class="brand">KUN GADI</div>
        <nav class="nav">${["Home", "Get Started", "About Us", "Momik"].map((t) => html`<span>${t}</span>`)}</nav>
      </header>
      <div class="body">
        <aside class="side">
          ${["Dashboard", "Users", "Nodes", "Routes", "Node Requests", "Route Requests", "Logout"].map((t) => html`<div class="item">${t}</div>`)}
        </aside>
        <main class="main">
          <route-map></route-map>
          <div class="actions">
            <button class="action edit">Edit</button>
            <button class="action clear">Clear</button>
            <button class="action delete">Delete</button>
          </div>
          <h2 class="details">Details</h2>
          <node-details></node-details>
        </main>
      </div>
      <page-footer></page-footer>
    `;
  }
}
